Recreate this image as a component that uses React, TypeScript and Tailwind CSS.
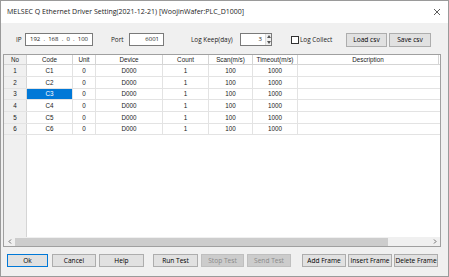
const ROWS = [
  { no: 1, code: "C1", h: "h-[12px]" },
  { no: 2, code: "C2", h: "h-[12px]" },
  { no: 3, code: "C3", h: "h-[11px]" },
  { no: 4, code: "C4", h: "h-[12px]" },
  { no: 5, code: "C5", h: "h-[12px]" },
  { no: 6, code: "C6", h: "h-[11px]" },
];

const COLS = [
  { label: "Code", w: "w-[46px]" },
  { label: "Unit", w: "w-[23px]" },
  { label: "Device", w: "w-[67px]" },
  { label: "Count", w: "w-[46px]" },
  { label: "Scan(m/s)", w: "w-[44px]" },
  { label: "Timeout(m/s)", w: "w-[45px]" },
  { label: "Description", w: "w-[141px]" },
];

function Btn({
  label,
  w = "w-[44px]",
  h = "h-[13px]",
  kind = "normal",
}: {
  label: string;
  w?: string;
  h?: string;
  kind?: "normal" | "default" | "disabled";
}) {
  const cls =
    kind === "default"
      ? "border-[#0078d7] bg-[#e1e1e1] text-black"
      : kind === "disabled"
        ? "border-[#bfbfbf] bg-[#cccccc] text-[#8a8a8a]"
        : "border-[#adadad] bg-[#e1e1e1] text-black";
  return (
    <div
      className={`${w} ${h} flex shrink-0 items-center justify-center border text-[6.6px] ${cls}`}
    >
      {label}
    </div>
  );
}

export default function App() {
  return (
    <div
      className="flex h-[277px] w-[449px] flex-col border border-[#9a9a9a] bg-[#f0f0f0] text-[#1a1a1a]"
      style={{ fontFamily: '"Open Sans", "Noto Sans", sans-serif' }}
    >
      {/* title bar */}
      <div className="flex h-[22px] shrink-0 items-center justify-between bg-white pl-[6px] pr-[6px]">
        <span className="text-[7px] text-[#222]">
          MELSEC Q Ethernet Driver Setting(2021-12-21) [WoojinWafer:PLC_D1000]
        </span>
        <svg width="8" height="8" viewBox="0 0 8 8" className="mr-[1px]">
          <path d="M1 1L7 7M7 1L1 7" stroke="#333" strokeWidth="0.8" />
        </svg>
      </div>

      {/* settings row */}
      <div className="mt-[10px] flex h-[13px] items-center pl-[15px] text-[6.4px]">
        <span className="w-[9px]">IP</span>
        <div className="flex h-[13px] w-[68px] items-center justify-between border border-[#7a7a7a] bg-white px-[4px] text-[6px]">
          <span>192</span>.<span>168</span>.<span>0</span>.<span>100</span>
        </div>
        <span className="ml-[18px] w-[18px]">Port</span>
        <div className="flex h-[13px] w-[35px] items-center justify-end border border-[#7a7a7a] bg-white pr-[4px] text-[6px]">
          6001
        </div>
        <span className="ml-[27px] w-[49px]">Log Keep(day)</span>
        <div className="flex h-[13px] w-[32px] items-center border border-[#7a7a7a] bg-white">
          <span className="flex-1 pr-[3px] text-right text-[6px]">3</span>
          <div className="flex h-full w-[6px] flex-col border-l border-[#dcdcdc] bg-[#f0f0f0]">
            <div className="flex flex-1 items-center justify-center">
              <svg width="4" height="3" viewBox="0 0 4 3">
                <path d="M0 3L2 0L4 3Z" fill="#555" />
              </svg>
            </div>
            <div className="flex flex-1 items-center justify-center">
              <svg width="4" height="3" viewBox="0 0 4 3">
                <path d="M0 0L2 3L4 0Z" fill="#555" />
              </svg>
            </div>
          </div>
        </div>
        <div className="ml-[19px] h-[8px] w-[8px] border border-[#333] bg-white" />
        <span className="ml-[1px] w-[46px]">Log Collect</span>
        <Btn label="Load csv" w="w-[41px]" h="h-[14px]" />
        <div className="ml-[2px]">
          <Btn label="Save csv" w="w-[42px]" h="h-[14px]" />
        </div>
      </div>

      {/* grid */}
      <div
        className="ml-[2px] mt-[8px] flex h-[193px] w-[438px] flex-col border border-[#a0a0a0] bg-white text-[6.3px]"
        style={{ fontFamily: '"Liberation Sans", Arial, sans-serif' }}
      >
        <div className="flex flex-1 flex-col">
          {/* header */}
          <div className="flex h-[10px] shrink-0 border-b border-[#d5d5d5] bg-white">
            <div className="flex w-[23px] items-center justify-center border-r border-[#d5d5d5] bg-[#f0f0f0]">
              No
            </div>
            {COLS.map((c) => (
              <div
                key={c.label}
                className={`${c.w} flex shrink-0 items-center justify-center border-r border-[#d5d5d5]`}
              >
                {c.label}
              </div>
            ))}
          </div>
          {ROWS.map((r) => (
            <div key={r.no} className={`${r.h} flex shrink-0 border-b border-[#e3e3e3]`}>
              <div className="flex w-[23px] items-center justify-center border-r border-[#d5d5d5] bg-[#f0f0f0]">
                {r.no}
              </div>
              <div
                className={`flex w-[46px] shrink-0 items-center justify-center border-r border-[#e3e3e3] ${
                  r.no === 3 ? "bg-[#0078d7] text-white" : ""
                }`}
              >
                {r.code}
              </div>
              <div className="flex w-[23px] shrink-0 items-center justify-center border-r border-[#e3e3e3]">
                0
              </div>
              <div className="flex w-[67px] shrink-0 items-center justify-center border-r border-[#e3e3e3]">
                D000
              </div>
              <div className="flex w-[46px] shrink-0 items-center justify-center border-r border-[#e3e3e3]">
                1
              </div>
              <div className="flex w-[44px] shrink-0 items-center justify-center border-r border-[#e3e3e3]">
                100
              </div>
              <div className="flex w-[45px] shrink-0 items-center justify-center border-r border-[#e3e3e3]">
                1000
              </div>
              <div className="w-[141px] shrink-0" />
            </div>
          ))}
          <div className="flex flex-1">
            <div className="w-[23px] border-r border-[#d5d5d5] bg-[#f0f0f0]" />
            <div className="flex-1" />
          </div>
        </div>
        {/* horizontal scrollbar */}
        <div className="flex h-[9px] shrink-0 items-center bg-[#f0f0f0]">
          <div className="flex w-[11px] items-center justify-center">
            <svg width="4" height="5" viewBox="0 0 4 5">
              <path d="M3 0.5L1 2.5L3 4.5" stroke="#606060" strokeWidth="0.9" fill="none" />
            </svg>
          </div>
          <div className="h-[8px] w-[373px] bg-[#cdcdcd]" />
          <div className="flex-1" />
          <div className="flex w-[11px] items-center justify-center">
            <svg width="4" height="5" viewBox="0 0 4 5">
              <path d="M1 0.5L3 2.5L1 4.5" stroke="#606060" strokeWidth="0.9" fill="none" />
            </svg>
          </div>
        </div>
      </div>

      {/* buttons */}
      <div className="mt-[7px] flex items-center pl-[6px]">
        <Btn label="Ok" w="w-[41px]" kind="default" />
        <div className="ml-[4px] flex gap-[3px]">
          <Btn label="Cancel" />
          <Btn label="Help" w="w-[45px]" />
        </div>
        <div className="ml-[9px] flex gap-[3px]">
          <Btn label="Run Test" w="w-[45px]" />
          <Btn label="Stop Test" w="w-[43px]" kind="disabled" />
          <Btn label="Send Test" kind="disabled" />
        </div>
        <div className="ml-[11px] flex gap-[2px]">
          <Btn label="Add Frame" />
          <Btn label="Insert Frame" />
          <Btn label="Delete Frame" />
        </div>
      </div>
    </div>
  );
}
